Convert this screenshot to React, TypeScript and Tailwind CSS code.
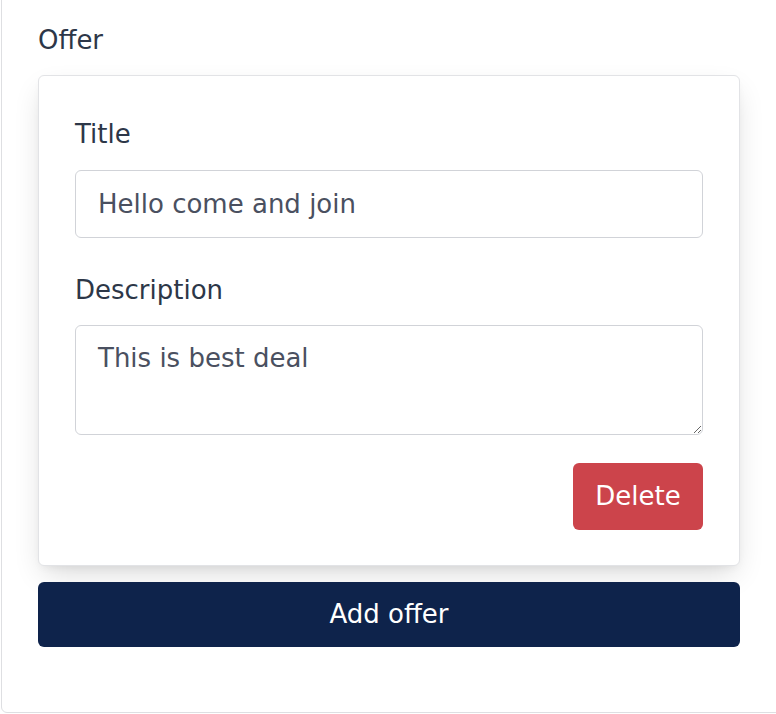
export default function App() {
  return (
    <div className="h-[714px] w-[776px] overflow-hidden bg-white pl-px" style={{ fontFamily: '"DejaVu Sans", sans-serif' }}>
      <div className="-mt-[20px] h-[733px] w-[800px] rounded-md border border-[#dedfe2] bg-white pl-[36px] pr-[59px] pt-[43px]">
        <div className="text-[26px] leading-[32px] text-[#2d3748]">Offer</div>
        <div className="mt-[19px] w-[702px] rounded-md border border-[#e2e3e6] bg-white px-[36px] pb-[35px] pt-[42px] shadow-[0_12px_28px_-6px_rgba(0,0,0,0.16),0_4px_10px_-4px_rgba(0,0,0,0.08)]">
          <label className="block text-[26px] leading-[32px] text-[#2d3748]">Title</label>
          <input
            className="mt-[20px] block h-[68px] w-full rounded-md border border-[#d1d3d8] px-[22px] text-[26px] text-[#4a5060] outline-none"
            defaultValue="Hello come and join"
          />
          <label className="mt-[36px] block text-[26px] leading-[32px] text-[#2d3748]">Description</label>
          <textarea
            className="mt-[19px] block h-[110px] w-full rounded-md border border-[#d1d3d8] px-[22px] py-[16px] text-[26px] leading-[32px] text-[#4a5060] outline-none"
            defaultValue="This is best deal"
          />
          <div className="mt-[28px] flex justify-end">
            <button className="h-[67px] w-[130px] rounded-md bg-[#cc444b] text-[26px] text-white">Delete</button>
          </div>
        </div>
        <button className="mt-[16px] h-[65px] w-[702px] rounded-md bg-[#0e234b] text-[26px] text-white">Add offer</button>
      </div>
    </div>
  );
}
